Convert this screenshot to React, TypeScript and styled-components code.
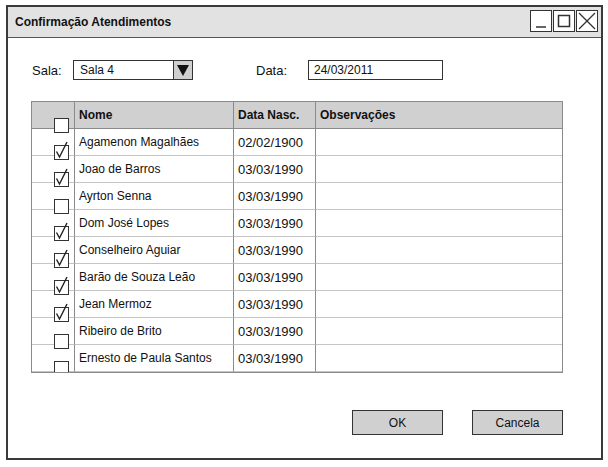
import { Fragment } from 'react';
import styled, { createGlobalStyle } from 'styled-components';

const GlobalStyle = createGlobalStyle`
  html, body {
    margin: 0;
    padding: 0;
    background: #ffffff;
  }
  body {
    font-family: 'Liberation Sans', Arial, sans-serif;
    font-size: 12px;
    color: #111;
  }
`;

const Window = styled.div`
  box-sizing: border-box;
  margin: 5px 0 0 6px;
  width: 597px;
  height: 455px;
  border: 2px solid #3a3a3a;
  display: flex;
  flex-direction: column;
  background: #fff;
`;

const TitleBar = styled.div`
  height: 30px;
  background: #e2e2e2;
  border-bottom: 1px solid #555;
  display: flex;
  align-items: center;
  justify-content: space-between;
  padding: 0 3px 0 7px;
`;

const Title = styled.span`
  font-weight: bold;
  font-size: 12px;
  margin-top: -1px;
`;

const WinButtons = styled.div`
  display: flex;
  gap: 1px;
  align-self: flex-start;
  margin-top: 3px;
`;

const WinButton = styled.div`
  box-sizing: border-box;
  width: 22px;
  height: 22px;
  border: 1.5px solid #333;
  background: #fff;
  display: flex;
  align-items: center;
  justify-content: center;
`;

const Body = styled.div`
  flex: 1;
  display: flex;
  flex-direction: column;
  padding: 22px 38px 0 23px;
`;

const FormRow = styled.div`
  display: flex;
  align-items: center;
  height: 20px;
`;

const Label = styled.span<{ $w: number }>`
  box-sizing: border-box;
  width: ${(p) => p.$w}px;
  padding-left: 1px;
  font-size: 13px;
`;

const SelectBox = styled.div`
  box-sizing: border-box;
  width: 120px;
  height: 20px;
  border: 1.5px solid #333;
  display: flex;
  align-items: center;
  margin-right: 62px;
`;

const SelectText = styled.span`
  flex: 1;
  padding-left: 6px;
  font-size: 12px;
`;

const SelectArrow = styled.div`
  width: 18px;
  height: 100%;
  background: #cfcfcf;
  border-left: 1.5px solid #333;
  display: flex;
  align-items: center;
  justify-content: center;
`;

const DateInput = styled.div`
  box-sizing: border-box;
  width: 135px;
  height: 20px;
  border: 1.5px solid #333;
  display: flex;
  align-items: center;
  padding-left: 5px;
  font-size: 12px;
`;

const Table = styled.div`
  box-sizing: border-box;
  margin-top: 21px;
  width: 532px;
  height: 272px;
  border: 1px solid #8a8a8a;
  overflow: hidden;
  display: grid;
  grid-template-columns: 43px 159px 82px 1fr;
  grid-auto-rows: 27px;
`;

const Cell = styled.div<{ $head?: boolean; $wide?: boolean }>`
  box-sizing: border-box;
  display: flex;
  align-items: center;
  padding-left: 4px;
  background: ${(p) => (p.$head ? '#d0d0d0' : '#fff')};
  font-weight: ${(p) => (p.$head ? 'bold' : 'normal')};
  font-size: ${(p) => (p.$wide ? '13px' : '12px')};
  border-bottom: 1px solid ${(p) => (p.$head ? '#8a8a8a' : '#c4c4c4')};
  border-right: 1px solid #8a8a8a;
  white-space: nowrap;
  &:nth-child(4n) {
    border-right: none;
  }
`;

const CheckCell = styled(Cell)`
  align-items: flex-start;
  padding-left: 22px;
`;

const Check = styled.div`
  position: relative;
  z-index: 1;
  box-sizing: border-box;
  margin-top: 16px;
  width: 15px;
  height: 15px;
  border: 1.5px solid #333;
  background: #fff;
  svg {
    position: absolute;
    left: 0;
    top: 0;
    overflow: visible;
  }
`;

const Footer = styled.div`
  display: flex;
  justify-content: flex-end;
  gap: 29px;
  margin-top: 37px;
`;

const Button = styled.div`
  box-sizing: border-box;
  width: 91px;
  height: 25px;
  background: #d0d0d0;
  border: 1.5px solid #333;
  display: flex;
  align-items: center;
  justify-content: center;
  font-size: 12px;
`;

const rows = [
  { name: 'Agamenon Magalhães', date: '02/02/1900', checked: true },
  { name: 'Joao de Barros', date: '03/03/1990', checked: true },
  { name: 'Ayrton Senna', date: '03/03/1990', checked: false },
  { name: 'Dom José Lopes', date: '03/03/1990', checked: true },
  { name: 'Conselheiro Aguiar', date: '03/03/1990', checked: true },
  { name: 'Barão de Souza Leão', date: '03/03/1990', checked: true },
  { name: 'Jean Mermoz', date: '03/03/1990', checked: true },
  { name: 'Ribeiro de Brito', date: '03/03/1990', checked: false },
  { name: 'Ernesto de Paula Santos', date: '03/03/1990', checked: false },
];

function CheckBox({ checked }: { checked: boolean }) {
  return (
    <Check>
      {checked ? (
        <svg width="12" height="12">
          <polyline
            points="1.5,5.5 4.5,11 12,-4"
            fill="none"
            stroke="#222"
            strokeWidth="1.4"
          />
        </svg>
      ) : null}
    </Check>
  );
}

export default function App() {
  return (
    <>
      <GlobalStyle />
      <Window>
        <TitleBar>
          <Title>Confirmação Atendimentos</Title>
          <WinButtons>
            <WinButton>
              <svg width="16" height="16">
                <line x1="3" y1="14" x2="13" y2="14" stroke="#333" strokeWidth="1.5" />
              </svg>
            </WinButton>
            <WinButton>
              <svg width="16" height="16">
                <rect x="2.5" y="2.5" width="11" height="11" fill="none" stroke="#333" strokeWidth="1.5" />
              </svg>
            </WinButton>
            <WinButton>
              <svg width="18" height="18">
                <line x1="1" y1="1" x2="17" y2="17" stroke="#333" strokeWidth="1.3" />
                <line x1="17" y1="1" x2="1" y2="17" stroke="#333" strokeWidth="1.3" />
              </svg>
            </WinButton>
          </WinButtons>
        </TitleBar>
        <Body>
          <FormRow>
            <Label $w={42}>Sala:</Label>
            <SelectBox>
              <SelectText>Sala 4</SelectText>
              <SelectArrow>
                <svg width="12" height="12">
                  <polygon points="0,1 12,1 6,12" fill="#111" />
                </svg>
              </SelectArrow>
            </SelectBox>
            <Label $w={53}>Data:</Label>
            <DateInput>24/03/2011</DateInput>
          </FormRow>
          <Table>
            <CheckCell $head>
              <CheckBox checked={false} />
            </CheckCell>
            <Cell $head>Nome</Cell>
            <Cell $head>Data Nasc.</Cell>
            <Cell $head>Observações</Cell>
            {rows.map((r) => (
              <Fragment key={r.name}>
                <CheckCell>
                  <CheckBox checked={r.checked} />
                </CheckCell>
                <Cell>{r.name}</Cell>
                <Cell $wide>{r.date}</Cell>
                <Cell />
              </Fragment>
            ))}
          </Table>
          <Footer>
            <Button>OK</Button>
            <Button>Cancela</Button>
          </Footer>
        </Body>
      </Window>
    </>
  );
}
